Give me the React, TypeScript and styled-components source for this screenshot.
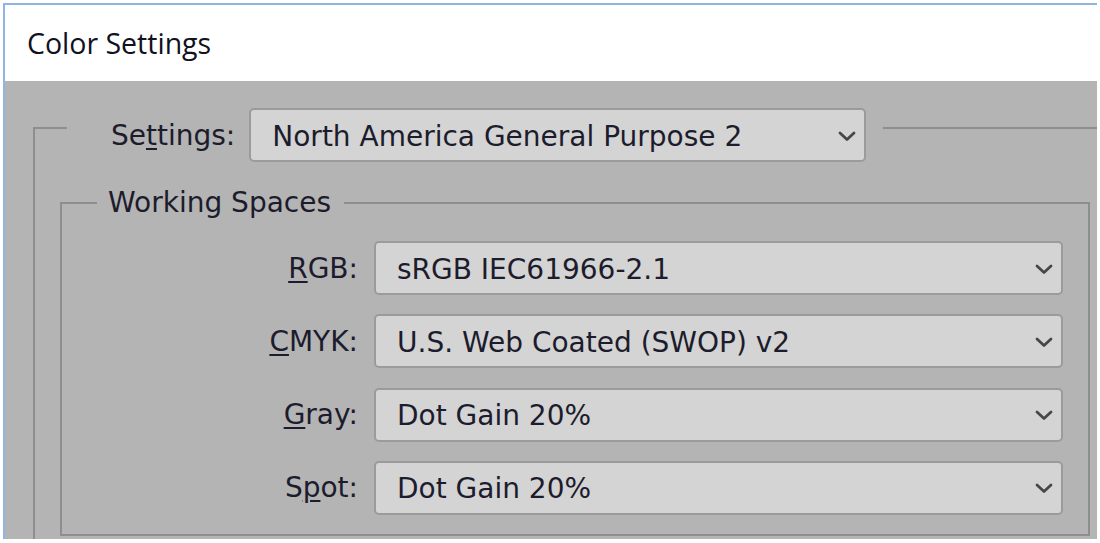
import styled, { createGlobalStyle } from "styled-components";

const GlobalStyle = createGlobalStyle`
	html, body {
		margin: 0;
		padding: 0;
		background: #ffffff;
	}
	body {
		font-family: "DejaVu Sans", "Liberation Sans", sans-serif;
		color: #1c1c2c;
	}
`;

const Chevron = () => (
	<svg width='18' height='11' viewBox='0 0 18 11'>
		<path d='M2 2 L9 8.5 L16 2' fill='none' stroke='#474747' strokeWidth='2.8' strokeLinecap='round' strokeLinejoin='round' />
	</svg>
);

const Combo: React.FC<{ value: string; width?: number }> = ({ value, width }) => (
	<Select width={width}>
		<SelectText>{value}</SelectText>
		<Chevron />
	</Select>
);

const rows = [
	{ pre: "", key: "R", post: "GB:", value: "sRGB IEC61966-2.1" },
	{ pre: "", key: "C", post: "MYK:", value: "U.S. Web Coated (SWOP) v2" },
	{ pre: "", key: "G", post: "ray:", value: "Dot Gain 20%" },
	{ pre: "S", key: "p", post: "ot:", value: "Dot Gain 20%" },
];

export default function App() {
	return (
		<>
			<GlobalStyle />
			<Window>
				<TitleBar>Color Settings</TitleBar>
				<Panel>
					<OuterGroup>
						<SettingsLegend>
							<Label>
								Se<u>t</u>tings:
							</Label>
							<Combo value='North America General Purpose 2' width={617} />
						</SettingsLegend>
						<InnerGroup>
							<GroupTitle>Working Spaces</GroupTitle>
							<Rows>
								{rows.map((r) => (
									<Row key={r.post}>
										<Label>
											{r.pre}
											<u>{r.key}</u>
											{r.post}
										</Label>
										<Combo value={r.value} />
									</Row>
								))}
							</Rows>
						</InnerGroup>
					</OuterGroup>
				</Panel>
			</Window>
		</>
	);
}

const Window = styled.div`
	margin: 3px 3px 0 3px;
	border-left: 2px solid #8db5e6;
	border-top: 2px solid #8db5e6;
	display: flex;
	flex-direction: column;
`;

const TitleBar = styled.div`
	height: 76px;
	background: #ffffff;
	display: flex;
	align-items: center;
	padding-left: 22px;
	font-family: "Open Sans", "Noto Sans", sans-serif;
	font-size: 28.5px;
	color: #111122;
`;

const Panel = styled.div`
	height: 458px;
	background: #b4b4b4;
	overflow: hidden;
	display: flex;
	flex-direction: column;
`;

const OuterGroup = styled.fieldset`
	margin: 13px -20px 0 28px;
	padding: 0;
	border: 2px solid #8e8e8e;
	min-inline-size: 0;
`;

const SettingsLegend = styled.legend`
	margin: 0 0 0 32px;
	padding: 14px 17px 0 44px;
	display: flex;
	align-items: center;
	gap: 14px;
`;

const Label = styled.span`
	font-size: 28px;
	white-space: nowrap;
	u {
		text-decoration-thickness: 2px;
		text-underline-offset: 3px;
	}
`;

const Select = styled.div<{ width?: number }>`
	box-sizing: border-box;
	width: ${(p) => (p.width ? `${p.width}px` : "auto")};
	height: 54px;
	background: #d4d4d4;
	border: 2px solid #9b9b9b;
	border-radius: 5px;
	display: flex;
	align-items: center;
	justify-content: space-between;
	padding: 2px 8px 0 21px;
`;

const SelectText = styled.span`
	font-size: 28px;
	white-space: nowrap;
`;

const InnerGroup = styled.fieldset`
	margin: 24px 25px 10px 25px;
	padding: 0;
	border: 2px solid #8e8e8e;
	min-inline-size: 0;
`;

const GroupTitle = styled.legend`
	margin-left: 35px;
	padding: 0 13px 0 11px;
	font-size: 28px;
`;

const Rows = styled.div`
	display: flex;
	flex-direction: column;
	gap: 19.3px;
	padding: 22px 25px 19px 0;
`;

const Row = styled.div`
	display: grid;
	grid-template-columns: 296px 1fr;
	column-gap: 16px;
	align-items: center;
	${Label} {
		text-align: right;
	}
`;
